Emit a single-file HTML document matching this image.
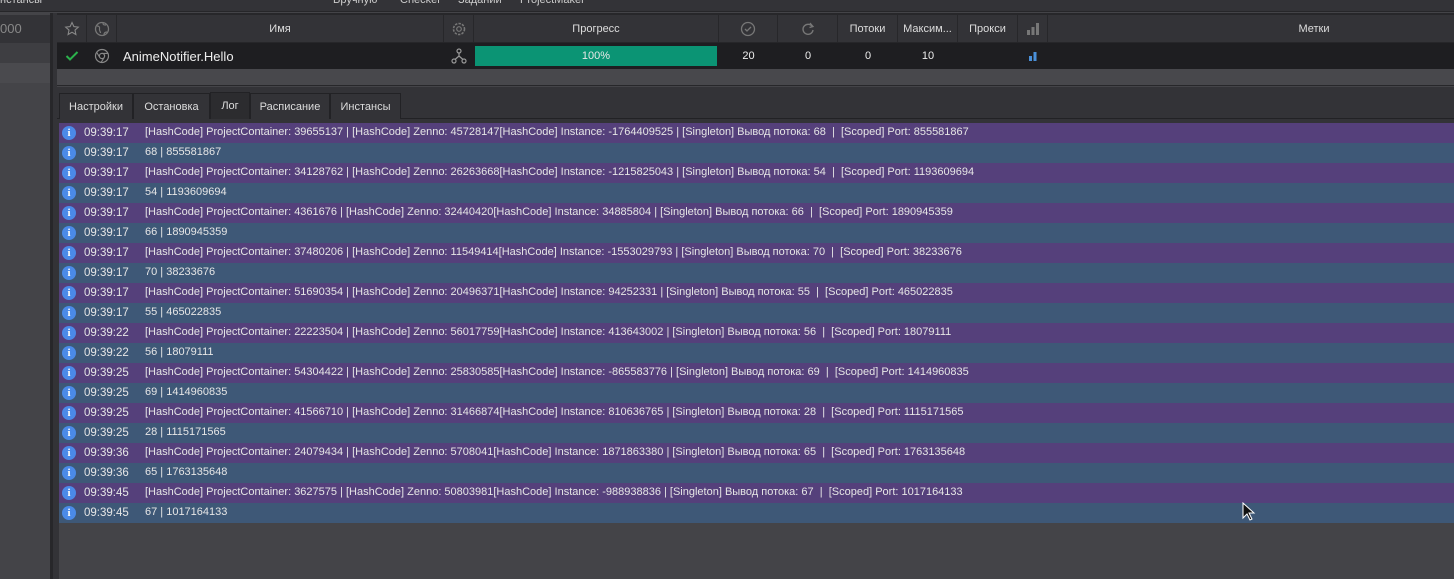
<!DOCTYPE html>
<html><head><meta charset="utf-8"><style>
*{margin:0;padding:0;box-sizing:border-box}
body{width:1454px;height:579px;overflow:hidden;background:#444448;font-family:"Liberation Sans","DejaVu Sans",sans-serif;color:#ddd;position:relative}
.a{position:absolute}
.top{left:0;top:0;width:1454px;height:12px;background:#333337;border-bottom:1px solid #262629;font-size:11px;color:#ccc}
.top span{position:absolute;top:-6px}
.hd{top:15px;height:28px;background:#333337;border-right:1px solid #27272a;font-size:11px;color:#ddd;display:flex;align-items:center;justify-content:center;border-bottom:1px solid #262629}
.rw{top:43px;height:26px;font-size:11px;color:#eee;display:flex;align-items:center;justify-content:center}
.tab{top:93px;height:26px;background:#333337;border:1px solid #222225;border-bottom:none;font-size:11px;color:#ddd;display:flex;align-items:center;justify-content:center}
.log{position:absolute;left:59px;top:123px;width:1395px}
.l{height:20px;display:flex;align-items:center;font-size:11px;color:#e6e6e6;white-space:nowrap;position:relative}
.l.p{background:#55407b}.l.b{background:#3e5877}
.ic{position:absolute;left:3px;top:3px;width:14px;height:14px;border-radius:50%;background:#4b8ae8;color:#fff;font-weight:bold;font-size:11px;text-align:center;line-height:14px;font-family:"Liberation Serif",serif}
.t{position:absolute;left:25px;top:4px;font-size:11.5px}
.m{position:absolute;left:86px;top:3px}
</style></head><body>
<div class="a top"><span style="left:0">нстансы</span><span style="left:333px">Вручную</span><span style="left:400px">Checker</span><span style="left:458px">Заданий</span><span style="left:520px">ProjectMaker</span></div>
<div class="a" style="left:0;top:15px;width:50px;height:28px;background:#333337;color:#888;font-size:13px;line-height:28px">000</div>
<div class="a" style="left:0;top:43px;width:50px;height:20px;background:#3e3e42"></div>
<div class="a" style="left:0;top:63px;width:50px;height:20px;background:#4a4a4e"></div>
<div class="a" style="left:50px;top:13px;width:3px;height:566px;background:#27272a"></div>
<div class="a" style="left:53px;top:13px;width:4px;height:566px;background:#333337"></div>
<div class="a" style="left:57px;top:13px;width:1397px;height:2px;background:#27272a"></div>
<div class="a" style="left:57px;top:43px;width:1397px;height:26px;background:#1e1e21"></div>
<div class="a" style="left:57px;top:69px;width:1397px;height:17px;background:#48484c;border-bottom:1px solid #27272a"></div>
<div class="a" style="left:57px;top:87px;width:1397px;height:32px;background:#333337"></div>
<div class="a" style="left:57px;top:118px;width:1397px;height:5px;background:#333337;border-top:1px solid #222225"></div>
<div class="a" style="left:57px;top:119px;width:2px;height:460px;background:#333337"></div>

<div class="a hd" style="left:57px;width:30px"><svg width="16" height="16" viewBox="0 0 16 16"><path d="M8 1.5l1.9 4.1 4.4.5-3.3 3 .9 4.4L8 11.3 4.1 13.5 5 9.1 1.7 6.1l4.4-.5z" fill="none" stroke="#888" stroke-width="1.1"/></svg></div>
<div class="a hd" style="left:87px;width:30px"><svg width="16" height="16" viewBox="0 0 16 16"><circle cx="8" cy="8" r="6.5" fill="none" stroke="#777" stroke-width="1.3"/><path d="M3 5c2 0 3 1 2.5 3s1 2 1 4M9 2c0 2 1 2 3 2M10 14c0-2 1-3 3-3" fill="none" stroke="#777" stroke-width="1.2"/></svg></div>
<div class="a hd" style="left:117px;width:327px">Имя</div>
<div class="a hd" style="left:444px;width:30px"><svg width="16" height="16" viewBox="0 0 16 16"><circle cx="8" cy="8" r="5.5" fill="none" stroke="#777" stroke-width="1.6" stroke-dasharray="2.4 1.2"/><circle cx="8" cy="8" r="2.3" fill="none" stroke="#777" stroke-width="1.2"/></svg></div>
<div class="a hd" style="left:474px;width:245px">Прогресс</div>
<div class="a hd" style="left:719px;width:59px"><svg width="16" height="16" viewBox="0 0 16 16"><circle cx="8" cy="8" r="6.5" fill="none" stroke="#777" stroke-width="1.3"/><path d="M5 8l2 2 4-4" fill="none" stroke="#777" stroke-width="1.3"/></svg></div>
<div class="a hd" style="left:778px;width:60px"><svg width="16" height="16" viewBox="0 0 16 16"><path d="M12.5 6A5 5 0 1 0 13 9" fill="none" stroke="#777" stroke-width="1.4"/><path d="M10 2l3 3.5-3.5 1" fill="none" stroke="#777" stroke-width="1.3"/></svg></div>
<div class="a hd" style="left:838px;width:60px">Потоки</div>
<div class="a hd" style="left:898px;width:60px">Максим...</div>
<div class="a hd" style="left:958px;width:60px">Прокси</div>
<div class="a hd" style="left:1018px;width:30px"><svg width="14" height="14" viewBox="0 0 14 14"><rect x="1" y="8" width="3" height="5" fill="#777"/><rect x="5.5" y="5" width="3" height="8" fill="#777"/><rect x="10" y="1" width="3" height="12" fill="#777"/></svg></div>
<div class="a hd" style="left:1048px;width:532px;border-right:none">Метки</div>

<div class="a rw" style="left:57px;width:30px"><svg width="14" height="12" viewBox="0 0 14 12"><path d="M1.5 6l3.5 3.5 7.5-7.5" fill="none" stroke="#2bb24c" stroke-width="2"/></svg></div>
<div class="a rw" style="left:87px;width:30px"><svg width="16" height="16" viewBox="0 0 16 16"><circle cx="8" cy="8" r="6.5" fill="none" stroke="#888" stroke-width="1.2"/><circle cx="8" cy="8" r="2.6" fill="none" stroke="#888" stroke-width="1.2"/><path d="M8 5.4h6M5.8 9.5L2.5 4M10.2 9.5L7 14.5" stroke="#888" stroke-width="1.1"/></svg></div>
<div class="a rw" style="left:123px;width:200px;justify-content:flex-start;font-size:13px;color:#eee">AnimeNotifier.Hello</div>
<div class="a rw" style="left:444px;width:30px"><svg width="16" height="16" viewBox="0 0 16 16"><circle cx="8" cy="3" r="2" fill="none" stroke="#999" stroke-width="1.2"/><circle cx="3" cy="13" r="2" fill="none" stroke="#999" stroke-width="1.2"/><circle cx="13" cy="13" r="2" fill="none" stroke="#999" stroke-width="1.2"/><path d="M8 5v3M8 8L4 11.5M8 8l4 3.5" stroke="#999" stroke-width="1.2" fill="none"/></svg></div>
<div class="a" style="left:475px;top:46px;width:242px;height:20px;background:#0b9474;color:#e8e8e8;font-size:11px;text-align:center;line-height:20px">100%</div>
<div class="a rw" style="left:719px;width:59px">20</div>
<div class="a rw" style="left:778px;width:60px">0</div>
<div class="a rw" style="left:838px;width:60px">0</div>
<div class="a rw" style="left:898px;width:60px">10</div>
<div class="a rw" style="left:1018px;width:30px"><svg width="10" height="10" viewBox="0 0 10 10"><rect x="1" y="5" width="3" height="5" fill="#4a90d9"/><rect x="5.5" y="1" width="3" height="9" fill="#4a90d9"/></svg></div>

<div class="a tab" style="left:59px;width:74px">Настройки</div>
<div class="a tab" style="left:133px;width:77px">Остановка</div>
<div class="a tab" style="left:210px;width:40px;top:92px;height:27px;background:#2c2c2f">Лог</div>
<div class="a tab" style="left:250px;width:80px">Расписание</div>
<div class="a tab" style="left:330px;width:71px">Инстансы</div>

<div class="log">
<div class="l p"><div class="ic">i</div><div class="t">09:39:17</div><div class="m">[HashCode] ProjectContainer: 39655137 | [HashCode] Zenno: 45728147[HashCode] Instance: -1764409525 | [Singleton] Вывод потока: 68 &nbsp;| &nbsp;[Scoped] Port: 855581867</div></div>
<div class="l b"><div class="ic">i</div><div class="t">09:39:17</div><div class="m">68 | 855581867</div></div>
<div class="l p"><div class="ic">i</div><div class="t">09:39:17</div><div class="m">[HashCode] ProjectContainer: 34128762 | [HashCode] Zenno: 26263668[HashCode] Instance: -1215825043 | [Singleton] Вывод потока: 54 &nbsp;| &nbsp;[Scoped] Port: 1193609694</div></div>
<div class="l b"><div class="ic">i</div><div class="t">09:39:17</div><div class="m">54 | 1193609694</div></div>
<div class="l p"><div class="ic">i</div><div class="t">09:39:17</div><div class="m">[HashCode] ProjectContainer: 4361676 | [HashCode] Zenno: 32440420[HashCode] Instance: 34885804 | [Singleton] Вывод потока: 66 &nbsp;| &nbsp;[Scoped] Port: 1890945359</div></div>
<div class="l b"><div class="ic">i</div><div class="t">09:39:17</div><div class="m">66 | 1890945359</div></div>
<div class="l p"><div class="ic">i</div><div class="t">09:39:17</div><div class="m">[HashCode] ProjectContainer: 37480206 | [HashCode] Zenno: 11549414[HashCode] Instance: -1553029793 | [Singleton] Вывод потока: 70 &nbsp;| &nbsp;[Scoped] Port: 38233676</div></div>
<div class="l b"><div class="ic">i</div><div class="t">09:39:17</div><div class="m">70 | 38233676</div></div>
<div class="l p"><div class="ic">i</div><div class="t">09:39:17</div><div class="m">[HashCode] ProjectContainer: 51690354 | [HashCode] Zenno: 20496371[HashCode] Instance: 94252331 | [Singleton] Вывод потока: 55 &nbsp;| &nbsp;[Scoped] Port: 465022835</div></div>
<div class="l b"><div class="ic">i</div><div class="t">09:39:17</div><div class="m">55 | 465022835</div></div>
<div class="l p"><div class="ic">i</div><div class="t">09:39:22</div><div class="m">[HashCode] ProjectContainer: 22223504 | [HashCode] Zenno: 56017759[HashCode] Instance: 413643002 | [Singleton] Вывод потока: 56 &nbsp;| &nbsp;[Scoped] Port: 18079111</div></div>
<div class="l b"><div class="ic">i</div><div class="t">09:39:22</div><div class="m">56 | 18079111</div></div>
<div class="l p"><div class="ic">i</div><div class="t">09:39:25</div><div class="m">[HashCode] ProjectContainer: 54304422 | [HashCode] Zenno: 25830585[HashCode] Instance: -865583776 | [Singleton] Вывод потока: 69 &nbsp;| &nbsp;[Scoped] Port: 1414960835</div></div>
<div class="l b"><div class="ic">i</div><div class="t">09:39:25</div><div class="m">69 | 1414960835</div></div>
<div class="l p"><div class="ic">i</div><div class="t">09:39:25</div><div class="m">[HashCode] ProjectContainer: 41566710 | [HashCode] Zenno: 31466874[HashCode] Instance: 810636765 | [Singleton] Вывод потока: 28 &nbsp;| &nbsp;[Scoped] Port: 1115171565</div></div>
<div class="l b"><div class="ic">i</div><div class="t">09:39:25</div><div class="m">28 | 1115171565</div></div>
<div class="l p"><div class="ic">i</div><div class="t">09:39:36</div><div class="m">[HashCode] ProjectContainer: 24079434 | [HashCode] Zenno: 5708041[HashCode] Instance: 1871863380 | [Singleton] Вывод потока: 65 &nbsp;| &nbsp;[Scoped] Port: 1763135648</div></div>
<div class="l b"><div class="ic">i</div><div class="t">09:39:36</div><div class="m">65 | 1763135648</div></div>
<div class="l p"><div class="ic">i</div><div class="t">09:39:45</div><div class="m">[HashCode] ProjectContainer: 3627575 | [HashCode] Zenno: 50803981[HashCode] Instance: -988938836 | [Singleton] Вывод потока: 67 &nbsp;| &nbsp;[Scoped] Port: 1017164133</div></div>
<div class="l b"><div class="ic">i</div><div class="t">09:39:45</div><div class="m">67 | 1017164133</div></div>
</div>
<svg class="a" style="left:1242px;top:502px" width="14" height="20" viewBox="0 0 14 20"><path d="M1 1v15l4-4 3 6 2-1-3-6h5z" fill="#111" stroke="#fff" stroke-width="1"/></svg>
</body></html>
